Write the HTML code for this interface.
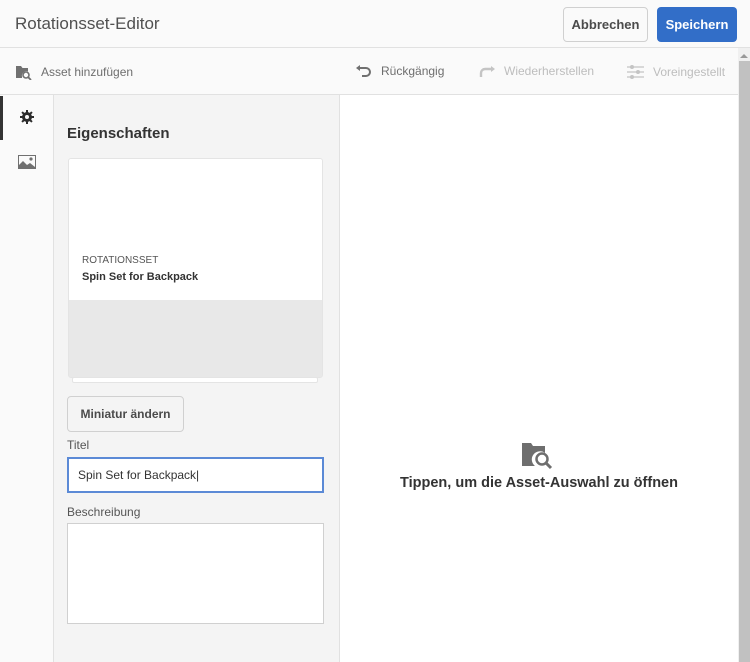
<!DOCTYPE html>
<html><head><meta charset="utf-8"><style>
*{box-sizing:border-box;margin:0;padding:0}
body{width:750px;height:662px;overflow:hidden;font-family:"Liberation Sans",sans-serif;background:#fff;position:relative;color:#4b4b4b}
.abs{position:absolute}
#hdr{left:0;top:0;width:750px;height:48px;background:#fafafa;border-bottom:1px solid #e1e1e1}
#title{left:15px;top:14px;font-size:17px;color:#505050}
.btn{position:absolute;top:7px;height:35px;border-radius:4px;font-size:13px;font-weight:bold;display:flex;align-items:center;justify-content:center}
#tb{left:0;top:48px;width:738px;height:47px;background:#fafafa;border-bottom:1px solid #e1e1e1}
.ti{position:absolute;top:64px;font-size:12px;display:flex;align-items:center}
#rail{left:0;top:95px;width:54px;height:567px;background:#fafafa;border-right:1px solid #e1e1e1}
#panel{left:54px;top:95px;width:286px;height:567px;background:#f4f4f4;border-right:1px solid #e1e1e1}
#scroll{left:738px;top:48px;width:12px;height:614px;background:#f0f0f0}
</style></head><body>
<div id="hdr" class="abs"></div>
<div id="title" class="abs">Rotationsset-Editor</div>
<div class="btn" style="left:563px;width:85px;background:#fafafa;border:1px solid #d0d0d0;color:#4b4b4b">Abbrechen</div>
<div class="btn" style="left:657px;width:80px;background:#326ec8;color:#fff">Speichern</div>
<div id="tb" class="abs"></div>
<div class="ti" style="left:15px;color:#6e6e6e">
<svg width="18" height="16" viewBox="0 0 18 16"><path d="M1 2h5l1.5 2H13v3.5A4.5 4.5 0 0 0 7 12.5V14H1z" fill="#707070"/><circle cx="11" cy="11" r="3" fill="none" stroke="#707070" stroke-width="1.6"/><path d="M13 13l3 3" stroke="#707070" stroke-width="1.8"/></svg>
<span style="margin-left:8px">Asset hinzufügen</span></div>
<div class="ti" style="left:355px;color:#6e6e6e">
<svg width="18" height="14" viewBox="0 0 18 14"><path d="M3 4h8a4 4 0 0 1 0 8H7" fill="none" stroke="#707070" stroke-width="2"/><path d="M1 4l4-3v6z" fill="#707070"/></svg>
<span style="margin-left:8px">Rückgängig</span></div>
<div class="ti" style="left:478px;color:#bdbdbd">
<svg width="18" height="14" viewBox="0 0 18 14"><path d="M15 5H7a4 4 0 0 0-4 4v4" fill="none" stroke="#c4c4c4" stroke-width="2.4"/><path d="M17 5l-4-3v6z" fill="#c4c4c4"/></svg>
<span style="margin-left:8px">Wiederherstellen</span></div>
<div class="ti" style="left:627px;color:#bdbdbd">
<svg width="18" height="16" viewBox="0 0 18 16"><path d="M0 3h17M0 8h17M0 13h17" stroke="#c4c4c4" stroke-width="1.3"/><circle cx="5" cy="3" r="2" fill="#c4c4c4"/><circle cx="11" cy="8" r="2" fill="#c4c4c4"/><circle cx="5" cy="13" r="2" fill="#c4c4c4"/></svg>
<span style="margin-left:8px">Voreingestellt</span></div>
<div id="rail" class="abs"></div>
<div class="abs" style="left:0;top:96px;width:3px;height:44px;background:#333"></div>
<svg class="abs" style="left:19px;top:109px" width="16" height="16" viewBox="0 0 16 16"><g fill="#2c2c2c"><circle cx="8" cy="8" r="5"/><rect x="7" y="1" width="2" height="14"/><rect x="1" y="7" width="14" height="2"/><rect x="7" y="1" width="2" height="14" transform="rotate(45 8 8)"/><rect x="7" y="1" width="2" height="14" transform="rotate(-45 8 8)"/></g><circle cx="8" cy="8" r="2" fill="#fafafa"/></svg>
<svg class="abs" style="left:18px;top:155px" width="18" height="14" viewBox="0 0 18 14"><rect x="0.5" y="0.5" width="17" height="13" fill="none" stroke="#707070"/><path d="M1 13V10l4-4 4 4 3-2 5 4v1z" fill="#707070"/><circle cx="13" cy="4" r="1.6" fill="#707070"/></svg>
<div id="panel" class="abs"></div>
<div class="abs" style="left:67px;top:125px;font-size:15px;font-weight:bold;color:#333">Eigenschaften</div>
<div class="abs" style="left:72px;top:377px;width:246px;height:6px;background:#fff;border:1px solid #e4e4e4;border-radius:2px"></div>
<div class="abs" style="left:68px;top:158px;width:255px;height:220px;background:#e8e8e8;border:1px solid #e4e4e4;border-radius:3px;overflow:hidden">
<div style="height:141px;background:#fff"></div></div>
<div class="abs" style="left:82px;top:255px;font-size:10px;color:#555">ROTATIONSSET</div>
<div class="abs" style="left:82px;top:271px;font-size:11px;font-weight:bold;color:#333">Spin Set for Backpack</div>
<div class="abs" style="left:67px;top:396px;width:117px;height:36px;border:1px solid #d0d0d0;border-radius:4px;background:#f4f4f4;font-size:12px;font-weight:bold;display:flex;align-items:center;justify-content:center;color:#4b4b4b">Miniatur ändern</div>
<div class="abs" style="left:67px;top:438px;font-size:12px;color:#555">Titel</div>
<div class="abs" style="left:67px;top:457px;width:257px;height:36px;border:2px solid #5b8ad6;background:#fff;font-size:12px;color:#333;padding:9px 0 0 9px">Spin Set for Backpack|</div>
<div class="abs" style="left:67px;top:505px;font-size:12px;color:#555">Beschreibung</div>
<div class="abs" style="left:67px;top:523px;width:257px;height:101px;border:1px solid #d0d0d0;background:#fff"></div>
<svg class="abs" style="left:522px;top:441px" width="32" height="30" viewBox="0 0 32 30"><path d="M0 2h9l2 3h12v7a8 8 0 0 0-10 13H0z" fill="#6e6e6e"/><circle cx="20" cy="18" r="5.5" fill="none" stroke="#6e6e6e" stroke-width="2.5"/><path d="M24 22l5 5" stroke="#6e6e6e" stroke-width="3"/></svg>
<div class="abs" style="left:340px;top:475px;width:398px;text-align:center;font-size:14.5px;font-weight:bold;color:#333">Tippen, um die Asset-Auswahl zu öffnen</div>
<div id="scroll" class="abs"></div>
<div class="abs" style="left:740px;top:54px;width:0;height:0;border-left:4px solid transparent;border-right:4px solid transparent;border-bottom:4px solid #999"></div>
<div class="abs" style="left:739px;top:61px;width:11px;height:601px;background:#c1c1c1"></div>
</body></html>
